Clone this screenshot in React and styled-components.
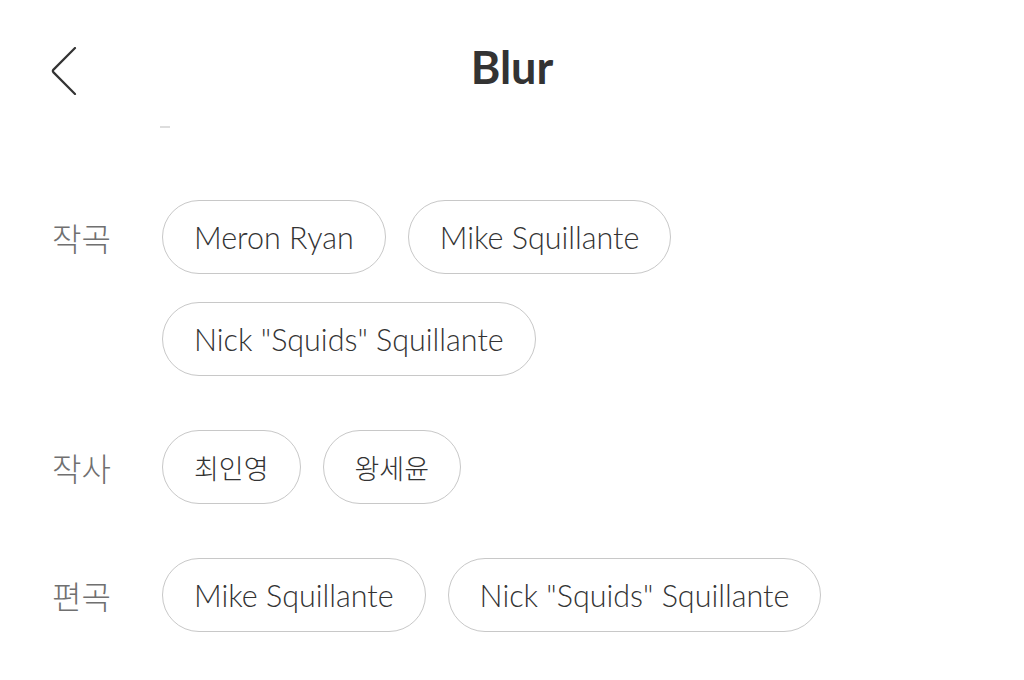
import React from "react";
import styled, { createGlobalStyle } from "styled-components";

const Global = createGlobalStyle`
  html, body { margin: 0; padding: 0; background: #fff; }
  body { font-family: Lato, "Noto Sans CJK KR", sans-serif; color: #333; }
`;

const Page = styled.div`
  width: 1024px;
  height: 680px;
  overflow: hidden;
  background: #fff;
`;

const Header = styled.header`
  position: relative;
  height: 126px;
  display: flex;
  align-items: flex-start;
  justify-content: center;
`;

const BackButton = styled.button`
  position: absolute;
  left: 44px;
  top: 44px;
  width: 40px;
  height: 54px;
  padding: 0;
  border: none;
  background: none;
  display: flex;
  align-items: center;
  justify-content: center;
  color: #333;
`;

const Title = styled.h1`
  margin: 0;
  padding-top: 40px;
  font-family: Lato, sans-serif;
  font-size: 45px;
  font-weight: 700;
  line-height: 54px;
  color: #333;
`;

const Remnant = styled.div`
  margin-left: 160px;
  width: 10px;
  height: 2px;
  background: #ddd;
`;

const Credits = styled.div`
  display: flex;
  flex-direction: column;
  gap: 54px;
  padding: 72px 0 0 52px;
`;

const Section = styled.section`
  display: grid;
  grid-template-columns: 110px 1fr;
  align-items: start;
`;

const Label = styled.div`
  height: 74px;
  display: flex;
  align-items: center;
  font-family: "Noto Sans CJK KR", sans-serif;
  font-size: 32px;
  font-weight: 300;
  color: #707070;
`;

const Chips = styled.div`
  display: flex;
  flex-wrap: wrap;
  column-gap: 22px;
  row-gap: 28px;
  max-width: ${(p) => p.$max}px;
`;

const Chip = styled.div`
  box-sizing: border-box;
  height: 74px;
  padding: 0 31px;
  display: flex;
  align-items: center;
  border: 1.5px solid #c8c8c8;
  border-radius: 37px;
  font-family: ${(p) => (p.$ko ? `"Noto Sans CJK KR", sans-serif` : `Lato, "Noto Sans CJK KR", sans-serif`)};
  font-size: ${(p) => (p.$ko ? "27px" : "30.5px")};
  font-weight: 300;
  color: #333;
  white-space: nowrap;
`;

const credits = [
  { label: "작곡", names: ["Meron Ryan", "Mike Squillante", 'Nick "Squids" Squillante'], max: 560 },
  { label: "작사", names: ["최인영", "왕세윤"], ko: true, max: 560 },
  { label: "편곡", names: ["Mike Squillante", 'Nick "Squids" Squillante'], max: 800 },
];

export default function App() {
  return (
    <Page>
      <Global />
      <Header>
        <BackButton aria-label="back">
          <svg width="26" height="48" viewBox="0 0 26 48" fill="none">
            <path d="M24 1 L2.5 22.6 Q1.2 24 2.5 25.4 L24 47" stroke="#333" strokeWidth="2.2" strokeLinecap="round" strokeLinejoin="round" />
          </svg>
        </BackButton>
        <Title>Blur</Title>
      </Header>
      <Remnant />
      <Credits>
        {credits.map((c) => (
          <Section key={c.label}>
            <Label>{c.label}</Label>
            <Chips $max={c.max}>
              {c.names.map((n) => (
                <Chip key={n} $ko={c.ko}>{n}</Chip>
              ))}
            </Chips>
          </Section>
        ))}
      </Credits>
    </Page>
  );
}
